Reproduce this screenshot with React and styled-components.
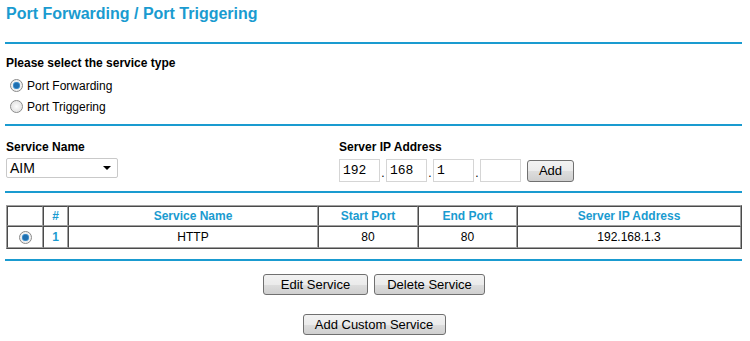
import React from 'react'
import styled, { createGlobalStyle } from 'styled-components'

const blue = '#1a9bd0'

const GlobalStyle = createGlobalStyle`
  body {
    margin: 0;
    background: #ffffff;
    font-family: "Liberation Sans", Arial, sans-serif;
    color: #000;
  }
`

const Page = styled.div`
  width: 750px;
  padding: 0 8px 0 6px;
  box-sizing: border-box;
`

const Title = styled.h1`
  margin: 0;
  padding-top: 5px;
  height: 37px;
  font-size: 16px;
  font-weight: bold;
  color: ${blue};
`

const Rule = styled.div`
  height: 2px;
  margin-left: -1px;
  background: ${blue};
`

const Section = styled.div`
  padding: ${p => p.$pad || '0'};
`

const Label = styled.div`
  font-size: 12px;
  font-weight: bold;
  line-height: 14px;
`

const RadioRow = styled.label`
  display: flex;
  align-items: center;
  gap: 4px;
  font-size: 12px;
  height: 21px;
  padding-left: 4px;
`

const Radio = styled.span`
  width: 11px;
  height: 11px;
  border-radius: 50%;
  border: 1px solid #8a8a8a;
  background: radial-gradient(circle at 50% 50%, ${p => (p.$on ? '#1f6fb0 0, #1f6fb0 2.5px, #5fa8dc 3.5px, #eee 4px' : '#fdfdfd 0, #e6e6e6 5px')});
  box-shadow: inset 0 0 1px #fff;
`

const Columns = styled.div`
  display: flex;
  padding: 14px 0 9px;
`

const Field = styled.div`
  width: ${p => p.$w || 'auto'};
  display: flex;
  flex-direction: column;
  gap: ${p => p.$gap || '5px'};
`

const Select = styled.div`
  width: 112px;
  height: 20px;
  box-sizing: border-box;
  border: 1px solid #c9c9c9;
  border-radius: 2px;
  display: flex;
  align-items: center;
  justify-content: space-between;
  padding: 0 6px 0 3px;
  font-size: 14px;
`

const Caret = styled.span`
  width: 0;
  height: 0;
  border-left: 4px solid transparent;
  border-right: 4px solid transparent;
  border-top: 4px solid #000;
`

const IpRow = styled.div`
  display: flex;
  align-items: center;
`

const IpBox = styled.div`
  width: 41px;
  height: 23px;
  box-sizing: border-box;
  border: 1px solid #d5d5d5;
  font-family: "Liberation Mono", "Courier New", monospace;
  font-size: 13px;
  display: flex;
  align-items: center;
  padding-left: 3px;
`

const Dot = styled.span`
  width: 6px;
  font-size: 12px;
  text-align: center;
  align-self: flex-end;
  padding-bottom: 2px;
`

const Button = styled.button`
  font-family: "Liberation Sans", Arial, sans-serif;
  font-size: 13px;
  color: #000;
  width: ${p => p.$w};
  height: ${p => p.$h || '21px'};
  padding: 0;
  border: 1px solid #707070;
  border-radius: 3px;
  background: linear-gradient(#f2f2f2 0%, #ebebeb 50%, #dddddd 51%, #cfcfcf 100%);
  margin-left: ${p => p.$ml || '0'};
`

const TableWrap = styled.div`
  padding: 12px 0 10px;
`

const Grid = styled.table`
  width: 736px;
  border-spacing: 0;
  border: 1px solid;
  border-color: #a0a0a0 #4a4a4a #4a4a4a #a0a0a0;
  font-size: 12px;
`

const Th = styled.th`
  height: 18px;
  padding: 0;
  color: ${blue};
  font-weight: bold;
  border: 1px solid;
  border-color: #4a4a4a #a0a0a0 #a0a0a0 #4a4a4a;
  width: ${p => p.$w || 'auto'};
`

const Td = styled.td`
  height: 20px;
  padding: 0;
  text-align: center;
  border: 1px solid;
  border-color: #4a4a4a #a0a0a0 #a0a0a0 #4a4a4a;
  color: ${p => (p.$blue ? blue : '#000')};
  font-weight: ${p => (p.$blue ? 'bold' : 'normal')};
`

const CellRadio = styled(Radio)`
  display: inline-block;
  vertical-align: middle;
`

const ButtonRow = styled.div`
  display: flex;
  justify-content: center;
  gap: 6px;
  padding-top: ${p => p.$pt || '0'};
`

const App = () => {
  return (
    <Page>
      <GlobalStyle />
      <Title>{'Port Forwarding / Port Triggering'}</Title>
      <Rule />
      <Section $pad="12px 0 7px">
        <Label>{'Please select the service type'}</Label>
        <div style={{ height: 5 }} />
        <RadioRow><Radio $on />{'Port Forwarding'}</RadioRow>
        <RadioRow><Radio />{'Port Triggering'}</RadioRow>
      </Section>
      <Rule />
      <Columns>
        <Field $w="333px" $gap="4px">
          <Label>{'Service Name'}</Label>
          <Select>{'AIM'}<Caret /></Select>
        </Field>
        <Field $gap="5px">
          <Label>{'Server IP Address'}</Label>
          <IpRow>
            <IpBox>{'192'}</IpBox>
            <Dot>{'.'}</Dot>
            <IpBox>{'168'}</IpBox>
            <Dot>{'.'}</Dot>
            <IpBox>{'1'}</IpBox>
            <Dot>{'.'}</Dot>
            <IpBox />
            <Button $w="47px" $h="22px" $ml="6px">{'Add'}</Button>
          </IpRow>
        </Field>
      </Columns>
      <Rule />
      <TableWrap>
        <Grid>
          <thead>
            <tr>
              <Th $w="34px" />
              <Th $w="23px">{'#'}</Th>
              <Th $w="248px">{'Service Name'}</Th>
              <Th $w="98px">{'Start Port'}</Th>
              <Th $w="97px">{'End Port'}</Th>
              <Th>{'Server IP Address'}</Th>
            </tr>
          </thead>
          <tbody>
            <tr>
              <Td><CellRadio $on /></Td>
              <Td $blue>{'1'}</Td>
              <Td>{'HTTP'}</Td>
              <Td>{'80'}</Td>
              <Td>{'80'}</Td>
              <Td>{'192.168.1.3'}</Td>
            </tr>
          </tbody>
        </Grid>
      </TableWrap>
      <Rule />
      <ButtonRow $pt="13px">
        <Button $w="105px">{'Edit Service'}</Button>
        <Button $w="111px">{'Delete Service'}</Button>
      </ButtonRow>
      <ButtonRow $pt="19px">
        <Button $w="143px">{'Add Custom Service'}</Button>
      </ButtonRow>
    </Page>
  )
}

export default App
